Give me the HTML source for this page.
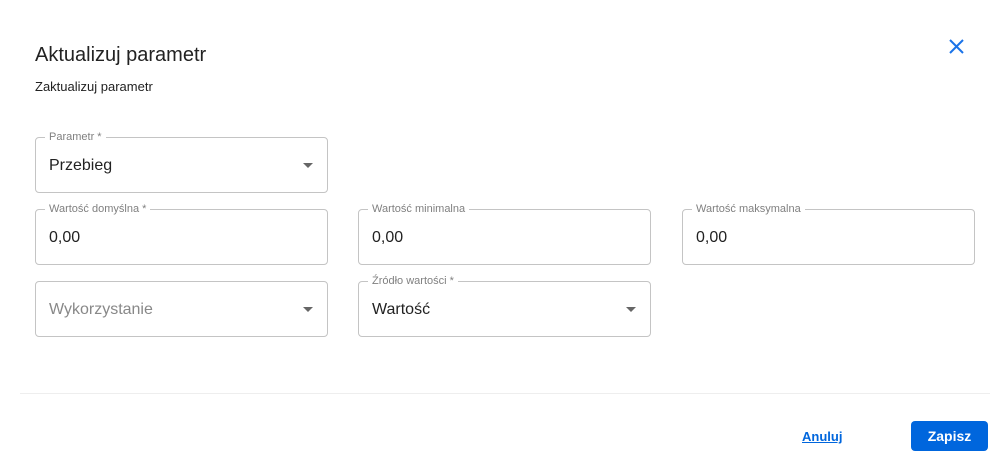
<html><head><style>
body{margin:0;width:1003px;height:475px;background:#fff;font-family:"Liberation Sans",Arial,sans-serif;position:relative;overflow:hidden}
.a{position:absolute}
.f{position:absolute;border:1px solid #c4c4c4;border-radius:4px;box-sizing:border-box;width:293px;height:56px}
.f .l{position:absolute;top:-7px;left:9px;background:#fff;padding:0 4px;font-size:11px;color:#808080;line-height:13px}
.f .v{position:absolute;left:13px;top:19px;font-size:16px;color:#222}
.f .c{position:absolute;right:14px;top:25px;width:0;height:0;border-left:5px solid transparent;border-right:5px solid transparent;border-top:5px solid #666}
</style></head><body>
<div class="a" style="left:35px;top:44px;font-size:20px;color:#222">Aktualizuj parametr</div>
<div class="a" style="left:35px;top:79px;font-size:13px;color:#222">Zaktualizuj parametr</div>
<svg class="a" style="left:948px;top:38px" width="17" height="17" viewBox="0 0 17 17"><path d="M2 2L15 15M15 2L2 15" stroke="#1a73e8" stroke-width="2"/></svg>
<div class="f" style="left:35px;top:137px"><span class="l">Parametr *</span><span class="v">Przebieg</span><span class="c"></span></div>
<div class="f" style="left:35px;top:209px"><span class="l">Wartość domyślna *</span><span class="v">0,00</span></div>
<div class="f" style="left:358px;top:209px"><span class="l">Wartość minimalna</span><span class="v">0,00</span></div>
<div class="f" style="left:682px;top:209px"><span class="l">Wartość maksymalna</span><span class="v">0,00</span></div>
<div class="f" style="left:35px;top:281px"><span class="v" style="color:#888">Wykorzystanie</span><span class="c"></span></div>
<div class="f" style="left:358px;top:281px"><span class="l">Źródło wartości *</span><span class="v">Wartość</span><span class="c"></span></div>
<div class="a" style="left:20px;top:393px;width:970px;height:1px;background:#eee"></div>
<div class="a" style="left:802px;top:429px;font-size:13px;font-weight:bold;color:#0066dd;text-decoration:underline">Anuluj</div>
<div class="a" style="left:911px;top:421px;width:77px;height:30px;background:#0066dd;border-radius:4px;color:#fff;font-size:14px;font-weight:bold;text-align:center;line-height:30px">Zapisz</div>
</body></html>
